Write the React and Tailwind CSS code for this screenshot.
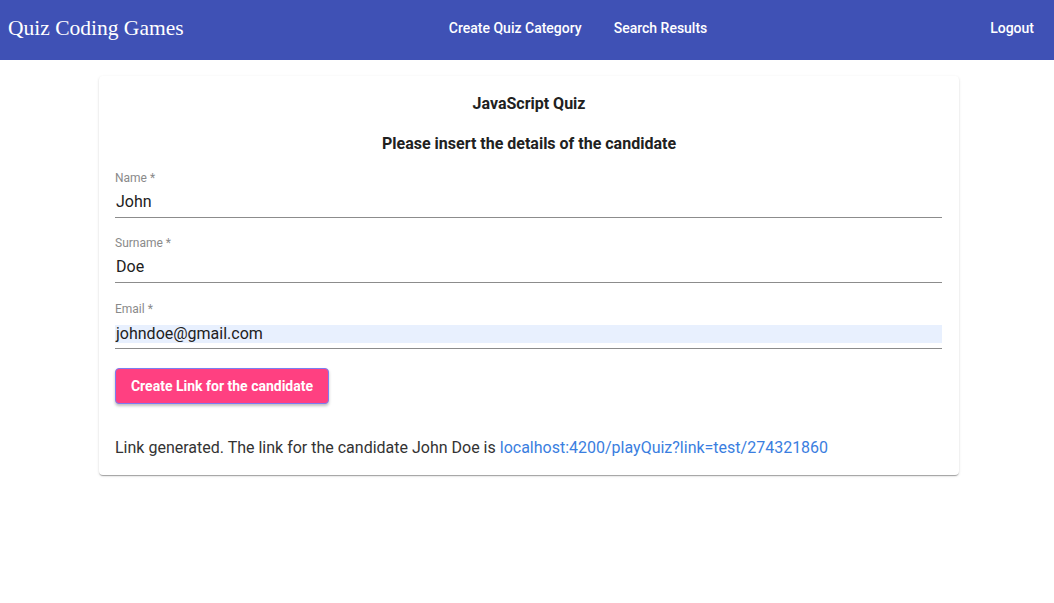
export default function App() {
  return (
    <div className="min-h-screen w-full bg-white" style={{ fontFamily: 'Roboto, "Liberation Sans", sans-serif' }}>
      {/* toolbar */}
      <div className="h-[60px] w-full bg-[#3f51b5] flex flex-row items-center px-2 pb-[4px] text-white">
        <div className="text-[21.5px] w-[200px] pt-[1px]" style={{ fontFamily: '"Liberation Serif", serif' }}>Quiz Coding Games</div>
        <div className="flex-1 flex flex-row justify-center gap-8 text-sm font-medium pr-[42px]">
          <span>Create Quiz Category</span>
          <span>Search Results</span>
        </div>
        <div className="text-sm font-medium pr-[12px]">Logout</div>
      </div>

      {/* card */}
      <div className="ml-[99px] mt-4 w-[860px] rounded bg-white px-4 pt-[18px] pb-[17px] shadow-[0_2px_1px_-1px_rgba(0,0,0,0.2),0_1px_1px_0_rgba(0,0,0,0.14),0_1px_3px_0_rgba(0,0,0,0.12)]">
        <div className="text-center text-base font-bold text-[#212121] leading-5">JavaScript Quiz</div>
        <div className="mt-[20px] text-center text-base font-bold text-[#212121] leading-5">Please insert the details of the candidate</div>

        <div className="mt-[16px] flex flex-col pr-[1px]">
          <Field label="Name *" value="John" />
          <div className="mt-[17px]">
            <Field label="Surname *" value="Doe" />
          </div>
          <div className="mt-[18px]">
            <Field label="Email *" value="johndoe@gmail.com" filled />
          </div>
        </div>

        <button className="mt-[19px] h-[36px] w-[214px] rounded bg-[#ff4081] text-sm font-bold text-white border border-[#7b7cf0] shadow-[0_2px_3px_rgba(0,0,0,0.25)]">
          Create Link for the candidate
        </button>

        <div className="mt-[34px] text-base text-[#333333] leading-5">
          Link generated. The link for the candidate John Doe is{' '}
          <span className="text-[#3a7ee0]">localhost:4200/playQuiz?link=test/274321860</span>
        </div>
      </div>
    </div>
  );
}

function Field({ label, value, filled }) {
  return (
    <div className="flex flex-col">
      <div className="h-4 text-xs text-[#8a8a8a] leading-4">{label}</div>
      <div className="mt-[5px] h-[21px] flex flex-col justify-end">
        <div className={`pl-[1px] text-base text-[#212121] ${filled ? 'h-[18px] leading-[18px] bg-[#e8f0fe]' : 'h-[21px] leading-[21px]'}`}>{value}</div>
      </div>
      <div className="mt-[5px] h-px bg-[#8c8c8c]" />
    </div>
  );
}
